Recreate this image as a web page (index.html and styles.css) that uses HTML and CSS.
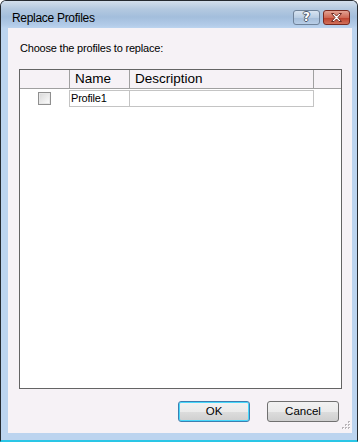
FILE: index.html
```html
<!DOCTYPE html>
<html>
<head>
<meta charset="utf-8">
<link rel="stylesheet" href="styles.css">
</head>
<body>
<div class="window">
  <div class="titlebar">
    <span class="title">Replace Profiles</span>
    <div class="caption-buttons">
      <div class="cbtn help"><span class="qmark">?</span></div>
      <div class="cbtn close">
        <svg width="15" height="9" viewBox="0 0 15 9">
          <path d="M2.5 0.5 L5 0.5 L7.5 3 L10 0.5 L12.5 0.5 L9 4.5 L12.5 8.5 L10 8.5 L7.5 6 L5 8.5 L2.5 8.5 L6 4.5 Z" fill="#fff" stroke="#6e2a22" stroke-width="1"/>
        </svg>
      </div>
    </div>
  </div>
  <div class="client">
    <div class="label">Choose the profiles to replace:</div>
    <div class="list">
      <div class="list-header">
        <div class="hcell c1"></div>
        <div class="hcell c2">Name</div>
        <div class="hcell c3">Description</div>
        <div class="hcell c4"></div>
      </div>
      <div class="list-row">
        <div class="rcell r1"><span class="checkbox"></span></div>
        <div class="rcell r2">Profile1</div>
        <div class="rcell r3"></div>
      </div>
    </div>
    <div class="buttons">
      <div class="btn default">OK</div>
      <div class="btn">Cancel</div>
    </div>
    <svg class="grip" width="10" height="10" viewBox="0 0 10 10">
      <g fill="#b8b4b8">
        <rect x="8" y="0" width="2" height="2"/>
        <rect x="5" y="3" width="2" height="2"/><rect x="8" y="3" width="2" height="2"/>
        <rect x="2" y="6" width="2" height="2"/><rect x="5" y="6" width="2" height="2"/><rect x="8" y="6" width="2" height="2"/>
      </g>
      <g fill="#ffffff">
        <rect x="9" y="1" width="1" height="1"/>
        <rect x="6" y="4" width="1" height="1"/><rect x="9" y="4" width="1" height="1"/>
        <rect x="3" y="7" width="1" height="1"/><rect x="6" y="7" width="1" height="1"/><rect x="9" y="7" width="1" height="1"/>
      </g>
    </svg>
  </div>
</div>
</body>
</html>
```

FILE: styles.css
```css
html, body {
  margin: 0;
  padding: 0;
  background: #ffffff;
}
body {
  font-family: "Liberation Sans", Arial, sans-serif;
  font-size: 11px;
  color: #000;
}
.window {
  box-sizing: border-box;
  width: 358px;
  height: 442px;
  border: 1px solid #252a30;
  border-bottom: 2px solid #2ac6e6;
  border-radius: 6px 6px 0 0;
  background: #bcd4ef;
  display: flex;
  flex-direction: column;
  padding: 0 5px 7px 7px;
}
.titlebar {
  height: 27px;
  margin: 0 -5px 0 -7px;
  padding: 0 7px 0 11px;
  border-radius: 5px 5px 0 0;
  background: linear-gradient(to bottom, #d3dfec 0px, #b4c9e0 8px, #a3bedc 16px, #b2cbe8 24px, #bcd4ef 27px);
  display: flex;
  align-items: flex-start;
}
.title {
  margin-top: 10px;
  font-size: 12px;
  line-height: 14px;
  letter-spacing: -0.3px;
  color: #000;
}
.caption-buttons {
  margin-left: auto;
  margin-top: 9px;
  display: flex;
  gap: 3px;
}
.cbtn {
  box-sizing: border-box;
  width: 27px;
  height: 15px;
  border-radius: 3px;
  display: flex;
  align-items: center;
  justify-content: center;
}
.help {
  border: 1px solid #6f8299;
  background: linear-gradient(to bottom, #d8e4f1 0%, #b9cde3 50%, #a4bcd8 51%, #b8cee7 100%);
}
.qmark {
  font-family: "DejaVu Sans", sans-serif;
  font-weight: bold;
  font-size: 12px;
  line-height: 13px;
  color: #ffffff;
  text-shadow: 1px 0 #4c5a6c, -1px 0 #4c5a6c, 0 1px #4c5a6c, 0 -1px #4c5a6c;
}
.close {
  border: 1px solid #7a2a20;
  background: linear-gradient(to bottom, #e3a394 0%, #cf6a56 50%, #bc3f2b 51%, #d0705a 100%);
}
.close svg {
  display: block;
}
.client {
  flex: 1;
  position: relative;
  background: #f6f2f6;
  display: flex;
  flex-direction: column;
  padding: 13px 0 0 11px;
}
.label {
  padding-left: 1px;
  height: 14px;
  line-height: 14px;
  letter-spacing: -0.2px;
}
.list {
  box-sizing: border-box;
  margin-top: 14px;
  width: 323px;
  height: 320px;
  border: 1px solid #646464;
  background: #ffffff;
}
.list-header {
  display: flex;
  height: 19px;
}
.hcell {
  box-sizing: border-box;
  height: 19px;
  background: #f6f2f6;
  border-bottom: 1px solid #a0a0a0;
  border-right: 1px solid #a0a0a0;
  font-size: 13.5px;
  line-height: 18px;
  padding-left: 5px;
  white-space: nowrap;
}
.c1 { width: 50px; }
.c2 { width: 60px; }
.c3 { width: 184px; }
.c4 { flex: 1; border-right: none; }
.list-row {
  display: flex;
  margin-top: 1px;
  height: 17px;
}
.rcell {
  box-sizing: border-box;
  height: 17px;
  line-height: 15px;
}
.r1 {
  width: 49px;
  display: flex;
  align-items: center;
  justify-content: center;
}
.r2 {
  width: 60px;
  border: 1px solid #c4c4c4;
  border-right: none;
  padding-left: 1px;
  letter-spacing: -0.2px;
}
.r3 {
  width: 185px;
  border: 1px solid #c4c4c4;
}
.checkbox {
  box-sizing: border-box;
  width: 13px;
  height: 13px;
  border: 1px solid #8f8f8f;
  background: linear-gradient(135deg, #d8d8d8 0%, #f2f2f2 70%, #ffffff 100%);
  box-shadow: inset 0 0 0 1px #e8e8e8;
}
.buttons {
  display: flex;
  gap: 17px;
  margin-top: 12px;
  margin-left: 159px;
}
.btn {
  box-sizing: border-box;
  width: 72px;
  height: 21px;
  border: 1px solid #707070;
  border-radius: 3px;
  background: linear-gradient(to bottom, #f2f2f2 0%, #ebebeb 50%, #dddddd 51%, #cfcfcf 100%);
  text-align: center;
  line-height: 19px;
  font-size: 11.5px;
}
.btn.default {
  border-color: #3c7fb1;
  box-shadow: inset 0 0 0 1px #48d8fb;
}
.grip {
  position: absolute;
  right: 2px;
  bottom: 2px;
}
```
